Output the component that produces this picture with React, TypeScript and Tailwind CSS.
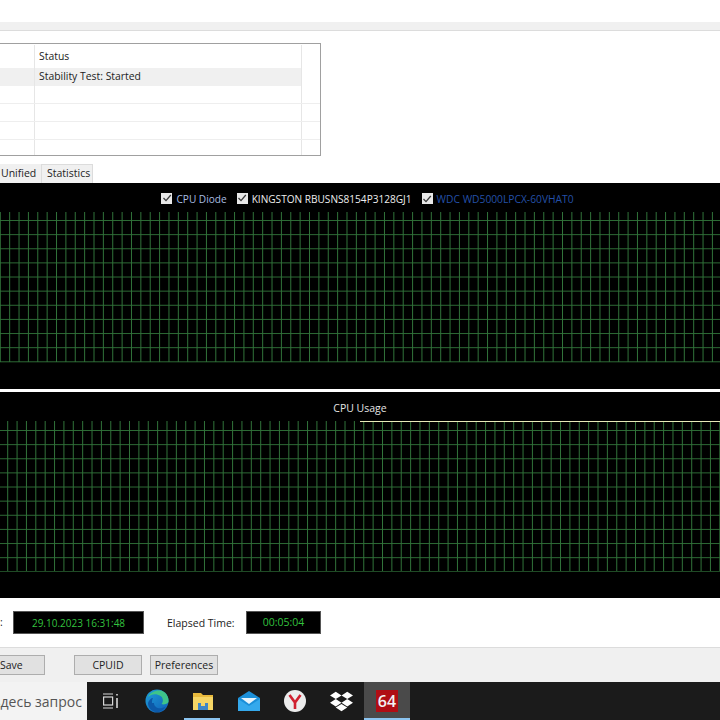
import { FaDropbox } from 'react-icons/fa';

const font = "[font-family:'Open_Sans','Noto_Sans',sans-serif]";

const log = [
  { status: 'Status', header: true },
  { status: 'Stability Test: Started', active: true },
  { status: '' },
  { status: '' },
  { status: '' },
  { status: '' },
];

function Grid({ x0, rows, y0 }: { x0: number; rows: number; y0: number }) {
  const cols = Array.from({ length: 78 }, (_, i) => x0 + i * 9.37);
  const lines = Array.from({ length: rows }, (_, i) => y0 + i * 14.13);
  return (
    <svg width="720" height="151" className="block">
      {lines.map((y) => (
        <line key={y} x1="0" x2="720" y1={y} y2={y} stroke="#2d6a35" strokeWidth="1" />
      ))}
      {cols.map((x) => (
        <line key={x} x1={x} x2={x} y1="0" y2="150" stroke="#31733a" strokeWidth="1" />
      ))}
    </svg>
  );
}

function Check({ label, color }: { label: string; color: string }) {
  return (
    <div className="flex items-center gap-[4px]">
      <div className="w-[11px] h-[11px] bg-[#e8e8e8] flex items-center justify-center">
        <svg width="10" height="10" viewBox="0 0 10 10">
          <path d="M1.5 5l2.5 2.6L8.8 2" fill="none" stroke="#3a3a3a" strokeWidth="1.3" />
        </svg>
      </div>
      <span className={`mt-[2px] ${color}`}>{label}</span>
    </div>
  );
}

function TaskIcon({ children, active }: { children: React.ReactNode; active?: boolean }) {
  return (
    <div className={`relative w-[46px] h-[38px] flex items-center justify-center ${active ? 'bg-[#4a4a4a]' : ''}`}>
      {children}
    </div>
  );
}

export default function App() {
  return (
    <div className={`w-[720px] h-[720px] overflow-hidden flex flex-col bg-white text-[#222] ${font}`}>
      <div className="h-[22px] shrink-0" />
      <div className="h-[9px] shrink-0 bg-[#f0f0f0] border-b border-[#dcdcdc]" />

      {/* event log */}
      <div className="h-[133px] shrink-0 pt-[12px]">
        <div className="w-[321px] h-[113px] border border-l-0 border-[#a0a0a0] overflow-hidden">
          {log.map((row, i) => (
            <div
              key={i}
              className={`flex ${row.header ? 'h-[24px] pt-[1px]' : 'h-[18px]'} ${i > 1 ? 'border-b border-[#eeeeee]' : ''}`}
            >
              <div className={`w-[35px] border-r border-[#e6e6e6] ${row.active ? 'bg-[#f0f0f0]' : ''}`} />
              <div className={`w-[267px] pl-[4px] flex items-center text-[10.4px] border-r border-[#e6e6e6] ${row.active ? 'bg-[#f0f0f0]' : ''}`}>
                {row.status}
              </div>
            </div>
          ))}
        </div>
      </div>

      {/* tabs */}
      <div className="h-[19px] shrink-0 flex items-stretch text-[10.5px]">
        <div className="w-[41px] bg-[#f0f0f0] flex items-center pl-[1px]">Unified</div>
        <div className="w-[52px] bg-[#f0f0f0] border border-b-0 border-[#dcdcdc] flex items-center pl-[5px]">Statistics</div>
      </div>

      {/* temperature chart */}
      <div className="h-[206px] shrink-0 bg-black flex flex-col">
        <div className="h-[29px] pl-[15px] pt-[2px] flex items-center justify-center gap-[10px]">
          <Check label="CPU Diode" color="text-[10.1px] text-[#a9bde0]" />
          <Check label="KINGSTON RBUSNS8154P3128GJ1" color="text-[10.1px] text-[#eeeeee]" />
          <Check label="WDC WD5000LPCX-60VHAT0" color="text-[10.25px] text-[#2450a8]" />
        </div>
        <Grid x0={0.3} y0={8.5} rows={11} />
      </div>

      <div className="h-[3px] shrink-0 bg-white" />

      {/* cpu usage chart */}
      <div className="h-[206px] shrink-0 bg-black flex flex-col">
        <div className="h-[29px] pt-[4px] flex items-center justify-center text-[10.5px] text-[#e4e4e4]">CPU Usage</div>
        <div className="relative">
          <Grid x0={7.7} y0={9.5} rows={11} />
          <div className="absolute left-[360px] right-0 top-0 h-[1px] bg-[#e8e8b8]" />
        </div>
      </div>

      {/* timers */}
      <div className="h-[49px] shrink-0 flex items-center text-[10.5px]">
        <span className="w-[13px]">:</span>
        <div className="w-[131px] h-[23px] pt-[1px] bg-black border border-[#555] flex items-center justify-center text-[10px] text-[#33c23f]">
          29.10.2023 16:31:48
        </div>
        <span className="ml-[23px] w-[79px] pt-[2px]">Elapsed Time:</span>
        <div className="w-[75px] h-[23px] pt-[1px] bg-black border border-[#555] flex items-center justify-center text-[#33c23f]">
          00:05:04
        </div>
      </div>

      {/* buttons */}
      <div className="h-[35px] shrink-0 bg-[#f0f0f0] border-t border-[#dcdcdc] flex items-center text-[10.5px]">
        <button className="w-[45px] h-[20px] pt-[1px] bg-[#e1e1e1] border border-l-0 border-[#adadad] text-left pl-0">Save</button>
        <button className="ml-[29px] w-[68px] h-[20px] pt-[1px] bg-[#e1e1e1] border border-[#adadad]">CPUID</button>
        <button className="ml-[8px] w-[68px] h-[20px] pt-[1px] bg-[#e1e1e1] border border-[#adadad]">Preferences</button>
      </div>

      {/* taskbar */}
      <div className="h-[38px] shrink-0 flex bg-[#1b1b1b]">
        <div className="w-[87px] bg-[#f3f3f3] overflow-hidden flex items-center justify-end pr-[5px] text-[14px] text-[#555] whitespace-nowrap">
          Введите здесь запрос
        </div>
        <div className="flex pl-[1px]">
          <TaskIcon>
            <svg width="18" height="16" viewBox="0 0 18 16" fill="none" stroke="#d8d8d8" strokeWidth="1.2">
              <path d="M1 1h10M1 15h10" />
              <rect x="1.6" y="4" width="9" height="8" />
              <path d="M15 1v1.5M15 5v10" strokeWidth="1.6" />
            </svg>
          </TaskIcon>
          <TaskIcon>
            <svg width="24" height="24" viewBox="0 0 24 24">
              <defs>
                <linearGradient id="edge" x1="0" y1="0" x2="1" y2="1">
                  <stop offset="0" stopColor="#1f9fd8" />
                  <stop offset="1" stopColor="#0f5fb8" />
                </linearGradient>
              </defs>
              <circle cx="12" cy="12" r="11.5" fill="url(#edge)" />
              <path d="M3 8C6 2 14 0 19 3c3 2 5 6 4.5 10-1 2-5 3-7 2 2-2 2-6-1-8C11 4 6 5 3 8z" fill="#3ec48a" />
              <path d="M9 14c0 4 4 6 8 5 2-.5 3-1 4-2-2 4-6 6.500-10 6-4-.5-8-4-8-9 1-3 3-5 5-5-1 1.500-1 3-1 5z" fill="#0c59a8" />
            </svg>
          </TaskIcon>
          <TaskIcon>
            <svg width="22" height="20" viewBox="0 0 22 20">
              <path d="M1 2h8l2 2h10v3H1z" fill="#e8b93c" />
              <rect x="1" y="6" width="20" height="13" fill="#f5d565" />
              <rect x="6" y="12" width="10" height="7" fill="#3f86c6" />
              <rect x="9" y="12" width="4" height="3" fill="#f5d565" />
            </svg>
            <div className="absolute left-[4px] right-[6px] bottom-0 h-[2px] bg-[#8cc4f0]" />
          </TaskIcon>
          <TaskIcon>
            <svg width="24" height="22" viewBox="0 0 24 22">
              <path d="M1 8l11-7 11 7v13H1z" fill="#1b8fd8" />
              <path d="M4 8h16l-8 6z" fill="#e8f4fc" />
              <path d="M1 9l11 7 11-7v12H1z" fill="#35a9ec" />
            </svg>
          </TaskIcon>
          <TaskIcon>
            <svg width="22" height="22" viewBox="0 0 22 22">
              <circle cx="11" cy="11" r="11" fill="#ececec" />
              <path d="M5.500 5l5.500 7.500L16.500 5M11 12v7" fill="none" stroke="#d0202f" strokeWidth="2.600" />
            </svg>
          </TaskIcon>
          <TaskIcon>
            <FaDropbox className="text-white text-[23px]" />
          </TaskIcon>
          <TaskIcon active>
            <div className="w-[22px] h-[22px] bg-[#b00d14] flex items-center justify-center text-[#f2f2f2] text-[16px] font-semibold">
              64
            </div>
            <div className="absolute left-0 right-0 bottom-0 h-[2px] bg-[#8cc4f0]" />
          </TaskIcon>
        </div>
      </div>
    </div>
  );
}
